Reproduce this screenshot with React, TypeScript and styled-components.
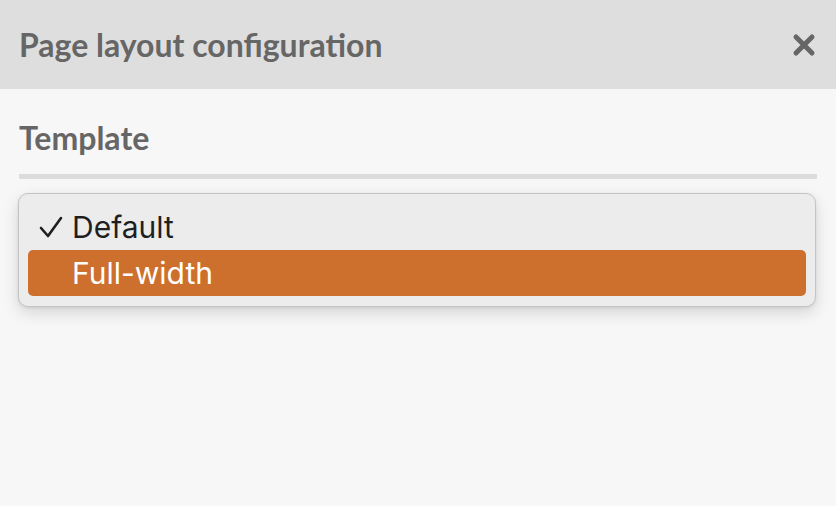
import React, { useState } from 'react';
import styled, { createGlobalStyle } from 'styled-components';

const GlobalStyle = createGlobalStyle`
  html, body {
    margin: 0;
    padding: 0;
    background: #f7f7f7;
  }
  body {
    font-family: Lato, 'Liberation Sans', sans-serif;
  }
`;

const Dialog = styled.div`
  width: 836px;
  height: 506px;
  display: flex;
  flex-direction: column;
  background: #f7f7f7;
`;

const Header = styled.div`
  height: 89px;
  box-sizing: border-box;
  padding: 0 19px;
  display: flex;
  align-items: center;
  justify-content: space-between;
  background: #dedede;
`;

const Title = styled.h1`
  margin: 0;
  font-family: Lato, sans-serif;
  font-weight: 700;
  font-size: 32px;
  color: #666;
`;

const CloseButton = styled.button`
  border: 0;
  background: none;
  padding: 0;
  width: 26px;
  height: 26px;
  display: flex;
  align-items: center;
  justify-content: center;
  color: #666;
  cursor: pointer;
`;

const Body = styled.div`
  padding: 23px 19px 0 19px;
  display: flex;
  flex-direction: column;
`;

const SectionTitle = styled.h2`
  margin: 0;
  font-family: Lato, sans-serif;
  font-weight: 700;
  font-size: 32px;
  line-height: 52px;
  color: #666;
`;

const Divider = styled.div`
  height: 5px;
  margin-top: 10px;
  background: #dcdcdc;
`;

const Menu = styled.ul`
  list-style: none;
  margin: 14px 1px 0 -1px;
  padding: 10px 9px;
  background: #ececec;
  border: 1px solid #c4c4c4;
  border-radius: 10px;
  box-shadow: 0 6px 16px rgba(0, 0, 0, 0.14), 0 1px 3px rgba(0, 0, 0, 0.08);
  font-family: Inter, 'Noto Sans', sans-serif;
`;

const Item = styled.li<{ $active?: boolean }>`
  height: 46px;
  display: flex;
  align-items: center;
  border-radius: 5px;
  font-size: 30px;
  background: ${p => (p.$active ? '#cd702d' : 'transparent')};
  color: ${p => (p.$active ? '#fff' : '#1f1f1f')};
`;

const Check = styled.span`
  width: 44px;
  display: flex;
  justify-content: flex-end;
  padding-right: 9px;
  box-sizing: border-box;
`;

const options = ['Default', 'Full-width'];

export default function App() {
  const [selected] = useState('Default');
  const [hover, setHover] = useState('Full-width');
  return (
    <Dialog>
      <GlobalStyle />
      <Header>
        <Title>Page layout configuration</Title>
        <CloseButton aria-label="Close">
          <svg width="24" height="24" viewBox="0 0 24 24">
            <path d="M4 4 L20 20 M20 4 L4 20" stroke="currentColor" strokeWidth="5" strokeLinecap="round" />
          </svg>
        </CloseButton>
      </Header>
      <Body>
        <SectionTitle>Template</SectionTitle>
        <Divider />
        <Menu>
          {options.map(o => (
            <Item key={o} $active={hover === o} onMouseEnter={() => setHover(o)}>
              <Check>
                {selected === o && (
                  <svg width="24" height="22" viewBox="0 0 24 22">
                    <path d="M2 12 L9 20 L22 2" fill="none" stroke="currentColor" strokeWidth="2.6" strokeLinecap="round" strokeLinejoin="round" />
                  </svg>
                )}
              </Check>
              {o}
            </Item>
          ))}
        </Menu>
      </Body>
    </Dialog>
  );
}
